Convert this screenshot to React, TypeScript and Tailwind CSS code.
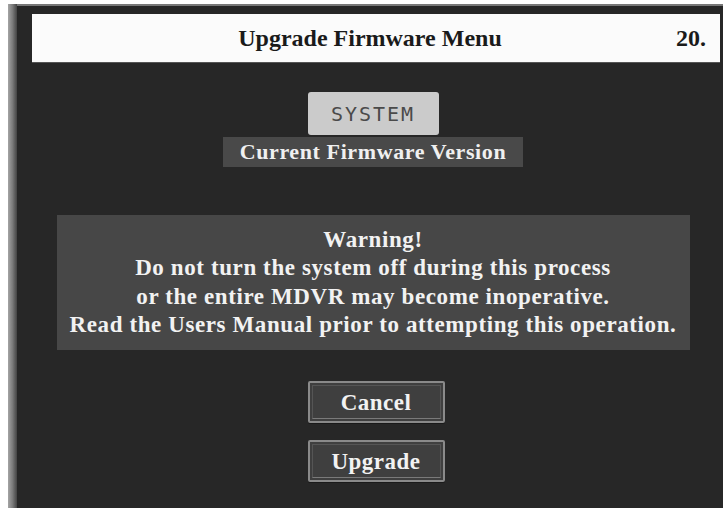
const serif = { fontFamily: '"Liberation Serif", "Times New Roman", serif' };

function OsdButton({ label }: { label: string }) {
  return (
    <div className="w-[137px] h-[42px] rounded-[2px] border-2 border-[#8a8a8a] bg-[#3f3f3f] p-[2px] shadow-[0_1px_0_#1a1a1a]">
      <div className="h-full w-full border border-[#555] border-b-[#7a7a7a] flex items-center justify-center">
        <span className="text-[23px] font-bold text-[#f2f2f2] leading-none tracking-[0.5px]" style={serif}>
          {label}
        </span>
      </div>
    </div>
  );
}

export default function App() {
  return (
    <div className="w-[723px] h-[508px] bg-white pt-[4px] pl-[8px] overflow-hidden flex">
      {/* monitor bezel edge */}
      <div className="w-[9px] h-full bg-gradient-to-r from-[#a5a5a5] via-[#7b7b7b] to-[#444]" />
      <div className="flex-1 h-full border-t-2 border-[#777] bg-[#272727] flex flex-col pt-[8px] pl-[15px] pr-[3px]">
        {/* title bar */}
        <div className="h-[48px] bg-[#fbfbfb] relative flex items-center justify-center shadow-[0_1px_0_#555]">
          <span className="text-[24px] font-bold text-[#1a1a1a] ml-[-12px]" style={serif}>
            Upgrade Firmware Menu
          </span>
          <span className="absolute right-[14px] text-[24px] font-bold text-[#1a1a1a]" style={serif}>
            20.
          </span>
        </div>

        <div className="flex flex-col items-center mr-[6px]">
          <div className="mt-[30px] w-[131px] h-[43px] rounded-[3px] bg-[#cbcbcb] flex items-center justify-center">
            <span
              className="text-[20px] text-[#4a4a4a] tracking-[2px]"
              style={{ fontFamily: '"DejaVu Sans Mono", "Liberation Mono", monospace' }}
            >
              SYSTEM
            </span>
          </div>
          <div className="mt-[2px] w-[300px] h-[30px] bg-[#494949] flex items-center justify-center">
            <span className="text-[22px] font-bold text-[#f0f0f0] tracking-[0.6px] leading-none" style={serif}>
              Current Firmware Version
            </span>
          </div>

          {/* warning panel */}
          <div
            className="mt-[48px] w-[633px] h-[135px] bg-[#474747] flex flex-col items-center justify-center text-[23px] leading-[28.5px] tracking-[0.6px] font-bold text-[#f2f2f2] text-center"
            style={serif}
          >
            <div>Warning!</div>
            <div>Do not turn the system off during this process</div>
            <div>or the entire MDVR may become inoperative.</div>
            <div>Read the Users Manual prior to attempting this operation.</div>
          </div>

          <div className="mt-[31px] flex flex-col items-center gap-[17px] ml-[6px]">
            <OsdButton label="Cancel" />
            <OsdButton label="Upgrade" />
          </div>
        </div>
      </div>
    </div>
  );
}
